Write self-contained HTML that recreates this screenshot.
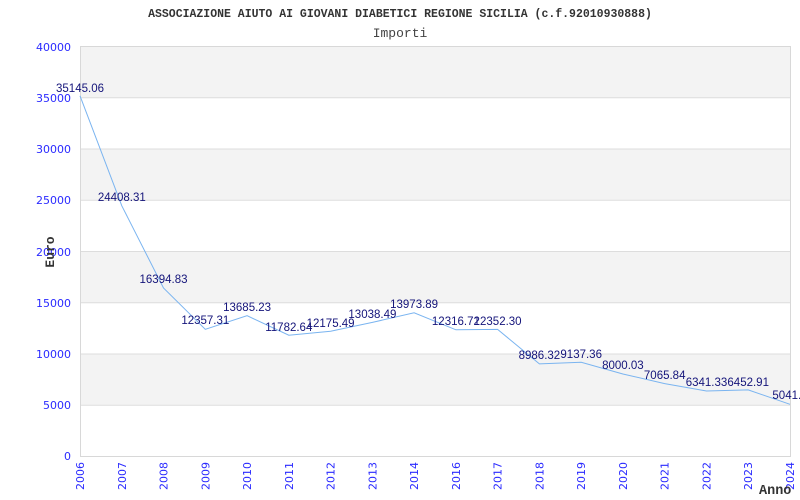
<!DOCTYPE html>
<html><head><style>body{margin:0;background:#fff}svg{display:block}</style></head><body>
<svg width="800" height="500" xmlns="http://www.w3.org/2000/svg">
<text x="400" y="17" text-anchor="middle" font-family="Liberation Mono, monospace" font-size="11.5" font-weight="bold" fill="#333">ASSOCIAZIONE AIUTO AI GIOVANI DIABETICI REGIONE SICILIA (c.f.92010930888)</text>
<text x="400" y="37" text-anchor="middle" font-family="Liberation Mono, monospace" font-size="13" fill="#444">Importi</text>
<g fill="#f3f3f3">
<rect x="80.5" y="46.5" width="710" height="51.25"/>
<rect x="80.5" y="149" width="710" height="51.25"/>
<rect x="80.5" y="251.5" width="710" height="51.25"/>
<rect x="80.5" y="354" width="710" height="51.25"/>
</g>
<g stroke="#ddd" stroke-width="1">
<line x1="80" y1="97.75" x2="790" y2="97.75"/><line x1="80" y1="149" x2="790" y2="149"/>
<line x1="80" y1="200.25" x2="790" y2="200.25"/><line x1="80" y1="251.5" x2="790" y2="251.5"/>
<line x1="80" y1="302.75" x2="790" y2="302.75"/><line x1="80" y1="354" x2="790" y2="354"/>
<line x1="80" y1="405.25" x2="790" y2="405.25"/>
<rect x="80.5" y="46.5" width="710" height="410" fill="none" stroke="#d8d8d8"/>
</g>
<g font-family="DejaVu Sans, sans-serif" font-size="11" fill="#2a2aff" text-anchor="end">
<text x="71" y="51">40000</text><text x="71" y="102">35000</text><text x="71" y="153">30000</text>
<text x="71" y="204">25000</text><text x="71" y="256">20000</text><text x="71" y="307">15000</text>
<text x="71" y="358">10000</text><text x="71" y="409">5000</text><text x="71" y="460">0</text>
</g>
<text transform="translate(54,252) rotate(-90)" text-anchor="middle" font-family="Liberation Mono, monospace" font-size="13" font-weight="bold" fill="#333">Euro</text>
<polyline fill="none" stroke="#7ab4f0" stroke-width="1" points="80,95.8 121.8,205.8 163.5,288 205.3,329.3 247.1,315.7 288.8,335.2 330.6,331.2 372.4,322.4 414.1,312.8 455.9,329.8 497.6,329.4 539.4,363.9 581.2,362.3 622.9,374 664.7,383.6 706.5,391 748.2,389.9 790,404.3"/>
<g font-family="Liberation Sans, sans-serif" font-size="11.5" fill="#14147a" text-anchor="middle">
<text x="80" y="92">35145.06</text><text x="121.8" y="201">24408.31</text><text x="163.5" y="283">16394.83</text>
<text x="205.3" y="324">12357.31</text><text x="247.1" y="311">13685.23</text><text x="288.8" y="331">11782.64</text>
<text x="330.6" y="327">12175.49</text><text x="372.4" y="318">13038.49</text><text x="414.1" y="308">13973.89</text>
<text x="455.9" y="325">12316.72</text><text x="497.6" y="325">12352.30</text><text x="539.4" y="359">8986.32</text>
<text x="581.2" y="358">9137.36</text><text x="622.9" y="369">8000.03</text><text x="664.7" y="379">7065.84</text>
<text x="706.5" y="386">6341.33</text><text x="748.2" y="386">6452.91</text><text x="790" y="399">5041.3</text>
</g>
<g font-family="DejaVu Sans, sans-serif" font-size="11" fill="#2a2aff" text-anchor="end">
<text transform="translate(84,462) rotate(-90)">2006</text><text transform="translate(125.8,462) rotate(-90)">2007</text>
<text transform="translate(167.5,462) rotate(-90)">2008</text><text transform="translate(209.3,462) rotate(-90)">2009</text>
<text transform="translate(251.1,462) rotate(-90)">2010</text><text transform="translate(292.8,462) rotate(-90)">2011</text>
<text transform="translate(334.6,462) rotate(-90)">2012</text><text transform="translate(376.4,462) rotate(-90)">2013</text>
<text transform="translate(418.1,462) rotate(-90)">2014</text><text transform="translate(459.9,462) rotate(-90)">2016</text>
<text transform="translate(501.6,462) rotate(-90)">2017</text><text transform="translate(543.4,462) rotate(-90)">2018</text>
<text transform="translate(585.2,462) rotate(-90)">2019</text><text transform="translate(626.9,462) rotate(-90)">2020</text>
<text transform="translate(668.7,462) rotate(-90)">2021</text><text transform="translate(710.5,462) rotate(-90)">2022</text>
<text transform="translate(752.2,462) rotate(-90)">2023</text><text transform="translate(794,462) rotate(-90)">2024</text>
</g>
<text x="759" y="494" font-family="Liberation Mono, monospace" font-size="13.5" font-weight="bold" fill="#333">Anno</text>
</svg>
</body></html>
